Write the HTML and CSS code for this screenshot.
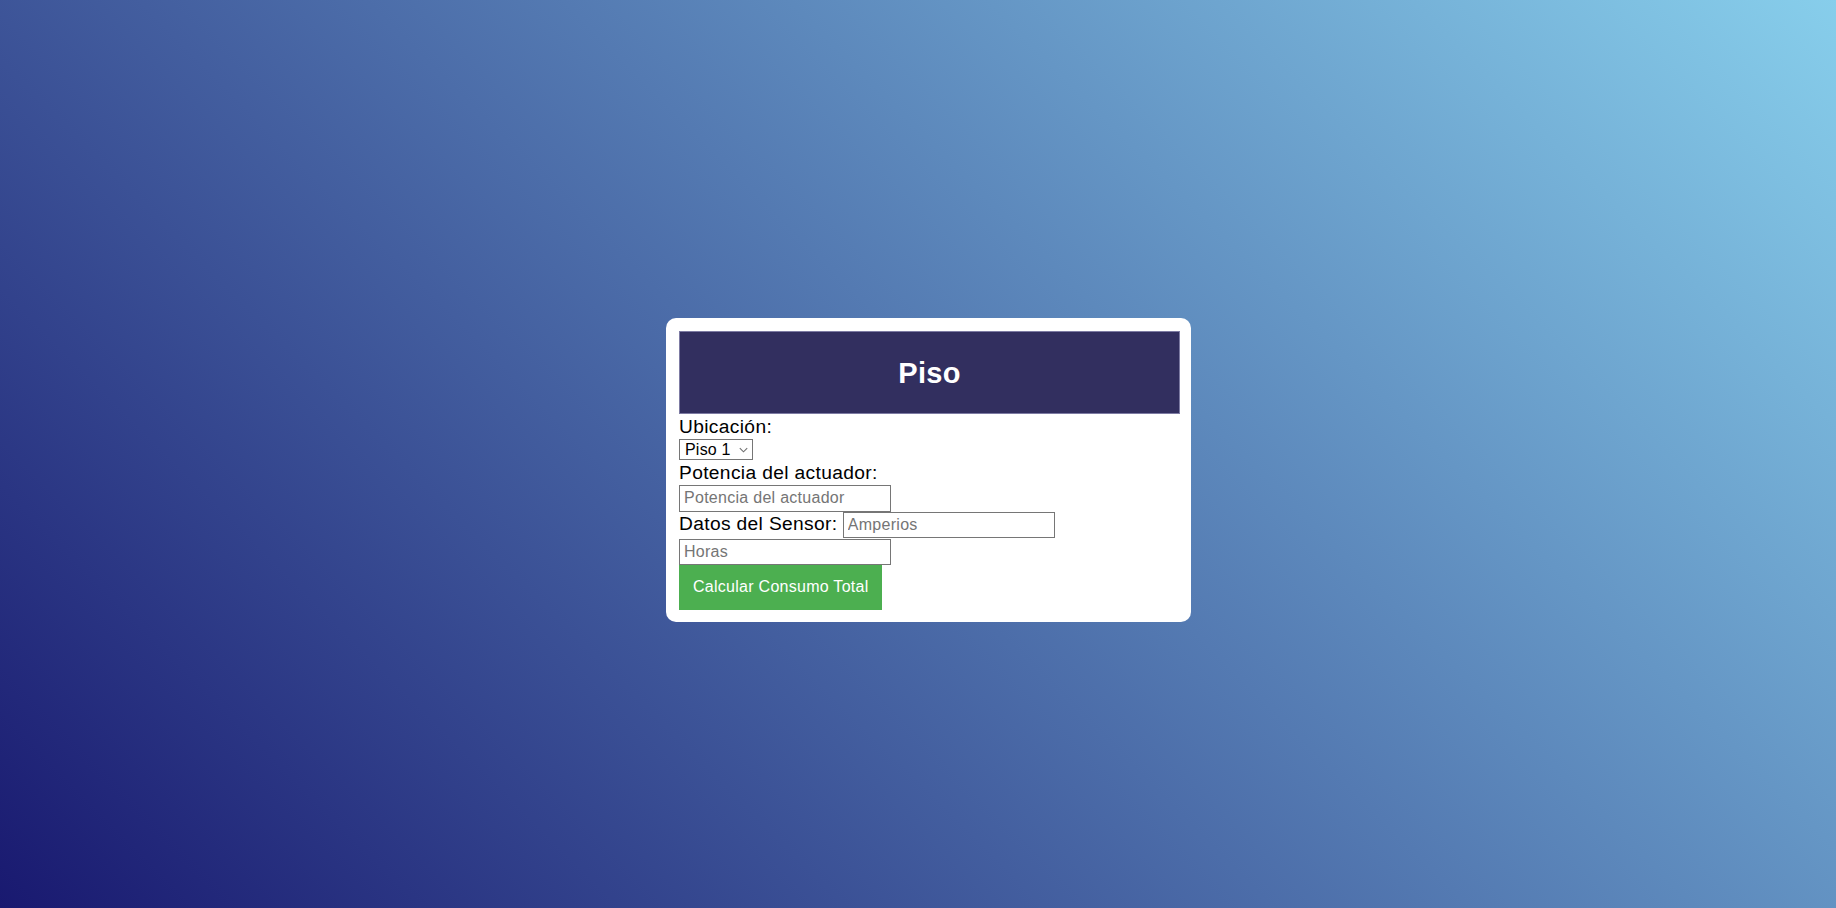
FILE: index.html
```html
<!DOCTYPE html>
<html lang="es">
<head>
<meta charset="utf-8">
<title>Piso</title>
<link rel="stylesheet" href="styles.css">
</head>
<body>
<div class="card">
  <div class="card-header"><h1 class="title">Piso</h1></div>
  <form class="form">
    <label class="field-label" for="ubicacion">Ubicación:</label>
    <div class="select-row">
      <span class="select-wrap">
        <select id="ubicacion" class="select">
          <option>Piso 1</option>
          <option>Piso 2</option>
          <option>Piso 3</option>
        </select>
        <svg class="chevron" width="9" height="6" viewBox="0 0 9 6" aria-hidden="true"><path d="M0.8 1.2 L4.5 4.8 L8.2 1.2" fill="none" stroke="#6f6f6f" stroke-width="1.1"/></svg>
      </span>
    </div>
    <label class="field-label" for="potencia">Potencia del actuador:</label>
    <div class="input-row"><input id="potencia" class="text-input" type="text" placeholder="Potencia del actuador"></div>
    <div class="sensor-row"><label class="inline-label" for="amperios">Datos del Sensor:</label> <input id="amperios" class="text-input" type="text" placeholder="Amperios"></div>
    <div class="input-row"><input class="text-input" type="text" placeholder="Horas"></div>
    <div class="button-row"><button type="button" class="calc-button">Calcular Consumo Total</button></div>
  </form>
</div>
</body>
</html>
```

FILE: styles.css
```css
html {
  height: 100%;
  background: linear-gradient(45deg, #191970, #87ceeb);
}

body {
  margin: 0;
  height: 100vh;
  box-sizing: border-box;
  padding: 32px 0 0 21px;
  display: flex;
  align-items: center;
  justify-content: center;
  font-family: "Liberation Sans", Arial, sans-serif;
  font-size: 16px;
  color: #000;
}

.card {
  width: 501px;
  padding: 13px 11px 12px 13px;
  background: #fff;
  border-radius: 10px;
}

.card-header {
  height: 83px;
  box-sizing: border-box;
  background: #322f5f;
  border: 1px solid #7d7ba3;
  display: flex;
  align-items: center;
  justify-content: center;
}

.title {
  margin: 0;
  color: #fff;
  font-size: 29px;
  font-weight: bold;
  letter-spacing: 0.3px;
  line-height: 34px;
}

.form {
  margin: 0;
}

.field-label {
  display: block;
  font-size: 19.2px;
  letter-spacing: 0.35px;
  line-height: 25px;
}

.select-row {
  height: 21px;
}

.select-wrap {
  position: relative;
  display: inline-block;
}

.select {
  -webkit-appearance: none;
  appearance: none;
  display: block;
  font-family: "Liberation Sans", Arial, sans-serif;
  font-size: 16px;
  letter-spacing: 0.2px;
  width: 74px;
  height: 21px;
  box-sizing: border-box;
  margin: 0;
  color: #000;
  background: #fff;
  border: 1px solid #767676;
  border-radius: 0;
  padding: 0 0 0 5px;
  line-height: 19px;
}

.chevron {
  position: absolute;
  right: 5px;
  top: 8px;
  pointer-events: none;
}

.input-row {
  line-height: 0;
}

.sensor-row {
  font-size: 19.2px;
  line-height: normal;
  height: 27.4px;
}

.inline-label {
  font-size: 19.2px;
  letter-spacing: 0.35px;
}

.text-input {
  font-family: "Liberation Sans", Arial, sans-serif;
  font-size: 16px;
  letter-spacing: 0.28px;
  width: 212px;
  height: 26.4px;
  box-sizing: border-box;
  padding: 3px 4px;
  margin: 0;
  border: 1px solid #767676;
  border-radius: 0;
  color: #000;
  vertical-align: baseline;
}

.text-input::placeholder {
  color: #757575;
}

.button-row {
  line-height: 0;
}

.calc-button {
  font-family: "Liberation Sans", Arial, sans-serif;
  font-size: 16px;
  letter-spacing: 0.27px;
  line-height: 18.4px;
  background: #4caf50;
  color: #fff;
  border: none;
  padding: 13px 13px 13px 14px;
  margin: 0;
  cursor: pointer;
}
```
